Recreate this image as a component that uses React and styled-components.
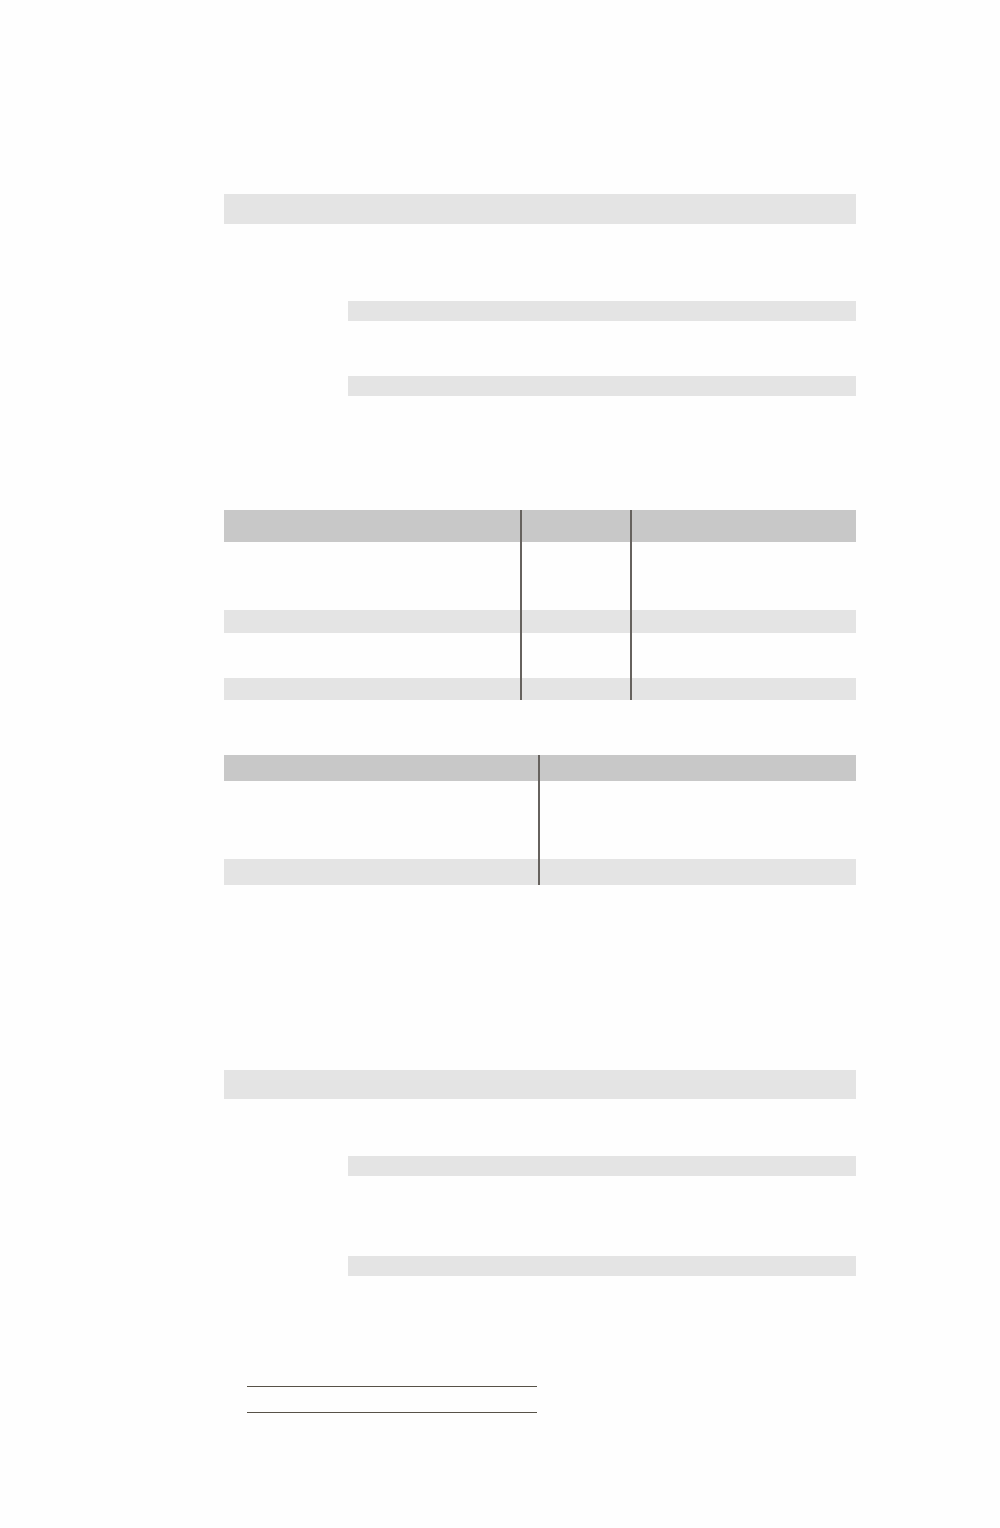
import React from "react";
import styled, { createGlobalStyle } from "styled-components";

const Global = createGlobalStyle`
  html, body { margin: 0; padding: 0; background: #fefefe; }
  body { font-family: "Liberation Serif", serif; }
`;

const Page = styled.div`
  width: 1000px;
  min-height: 1528px;
  box-sizing: border-box;
  padding: 194px 144px 0 224px;
  display: flex;
  flex-direction: column;
`;

const SectionBar = styled.div`
  height: ${(p) => p.$h}px;
  background: #e4e4e4;
  margin-top: ${(p) => p.$mt || 0}px;
`;

const SubBar = styled.div`
  height: 20px;
  margin-left: 124px;
  margin-top: ${(p) => p.$mt}px;
  background: #e4e4e4;
`;

const Table = styled.div`
  display: grid;
  grid-template-columns: ${(p) => p.$cols};
  margin-top: ${(p) => p.$mt}px;
`;

const Cell = styled.div`
  height: ${(p) => p.$h}px;
  background: ${(p) =>
    p.$kind === "head" ? "#c8c8c8" : p.$kind === "alt" ? "#e4e4e4" : "transparent"};
  border-left: ${(p) => (p.$first ? "none" : "2px solid #66625e")};
`;

const Footnotes = styled.div`
  margin-top: 110px;
  margin-left: 23px;
  width: 290px;
  display: flex;
  flex-direction: column;
  gap: 25px;
`;

const Rule = styled.div`
  height: 1px;
  background: #575248;
`;

function GridTable({ cols, rows, mt }) {
  const n = cols.split(" ").length;
  return (
    <Table $cols={cols} $mt={mt}>
      {rows.map((r, i) =>
        Array.from({ length: n }).map((_, j) => (
          <Cell key={`${i}-${j}`} $h={r.h} $kind={r.kind} $first={j === 0} />
        ))
      )}
    </Table>
  );
}

export default function App() {
  return (
    <>
      <Global />
      <Page>
        <SectionBar $h={30} />
        <SubBar $mt={77} />
        <SubBar $mt={55} />
        <GridTable
          mt={114}
          cols="296px 110px 226px"
          rows={[
            { h: 32, kind: "head" },
            { h: 68, kind: "plain" },
            { h: 23, kind: "alt" },
            { h: 45, kind: "plain" },
            { h: 22, kind: "alt" },
          ]}
        />
        <GridTable
          mt={55}
          cols="314px 318px"
          rows={[
            { h: 26, kind: "head" },
            { h: 78, kind: "plain" },
            { h: 26, kind: "alt" },
          ]}
        />
        <SectionBar $h={29} $mt={185} />
        <SubBar $mt={57} />
        <SubBar $mt={80} />
        <Footnotes>
          <Rule />
          <Rule />
        </Footnotes>
      </Page>
    </>
  );
}
